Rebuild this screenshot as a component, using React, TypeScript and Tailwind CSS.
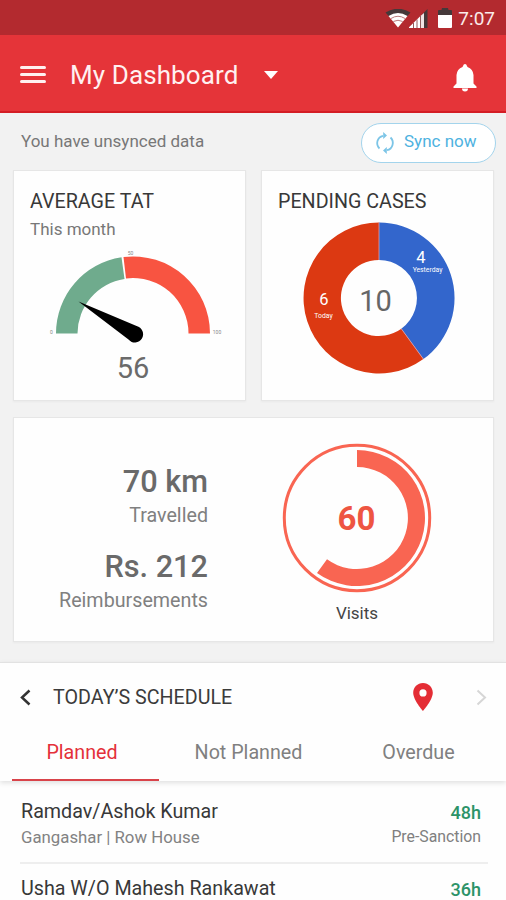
import type { ReactNode } from "react";

function StatusBar() {
  return (
    <div className="flex h-[35px] items-center justify-end bg-[#b32a2f] pr-[11px]">
      <svg width="45" height="20" viewBox="0 0 45 20" className="mt-0.5">
        <path d="M1.500 3.500Q14 -4 26.500 3.500L22.500 8Q14 2.500 5.500 8Z" fill="#45393a" />
        <path d="M4.500 7Q14 1 23.500 7L14 18.500Z" fill="#fff" />
        <path d="M7 9.500Q14 5 21 9.500M9.300 12.500Q14 10 18.700 12.500" fill="none" stroke="#b87a7c" strokeWidth="1" />
        <path d="M25 19V18.200L37 6.500V19Z" fill="#fff" />
        <path d="M37 6.500L43.500 0V19H40V8H37Z" fill="#45393a" />
        <path d="M37 6.500L40 4V19H37Z" fill="#f1e5e5" />
        <path d="M29.500 14V19M33 10.500V19M36.500 7V19" stroke="#85484a" strokeWidth="0.9" />
      </svg>
      <svg width="16" height="21" viewBox="0 0 16 21" className="ml-2">
        <path d="M1 4Q1 3 2 3H4.500L5 1H11L11.500 3H14Q15 3 15 4V8H1Z" fill="#45393a" />
        <path d="M1 8H15V20Q15 21 14 21H2Q1 21 1 20Z" fill="#fff" />
      </svg>
      <span className="ml-[5px] mt-0.5 text-[19px] leading-8 text-[#fbeaea]">7:07</span>
    </div>
  );
}

function Header() {
  return (
    <header className="flex h-[78px] items-center border-b-2 border-[#d41d25] bg-[#e53439] pl-5 pr-[29px]">
      <div className="mt-0.5 flex w-[26px] flex-col gap-1">
        <span className="h-[3px] rounded-full bg-[#fff0f0]" />
        <span className="h-[3px] rounded-full bg-[#fff0f0]" />
        <span className="h-[3px] rounded-full bg-[#fff0f0]" />
      </div>
      <h1 className="ml-6 mt-[3px] text-[26px] leading-8 tracking-[0.1px] text-[#fff0f0]">My Dashboard</h1>
      <svg width="14" height="8" viewBox="0 0 14 8" className="ml-[26px] mt-1">
        <path d="M0 0H14L7 8Z" fill="#fff" />
      </svg>
      <svg width="24" height="28" viewBox="0 0 24 28" className="ml-auto mt-[9px]">
        <path d="M12 0Q13.500 0 14 2L14.500 3Q20 5 20.500 11V19.500L23.500 22.500V24H.5V22.500L3.500 19.500V11Q4 5 9.500 3L10 2Q10.500 0 12 0Z" fill="#fff" />
        <path d="M9 24.500H15Q15 27.500 12 27.500Q9 27.500 9 24.500Z" fill="#fff" />
      </svg>
    </header>
  );
}

function Card({ children, className }: { children: ReactNode; className: string }) {
  return (
    <section className={"border border-[#e6e6e6] bg-[#fefefe] shadow-[0_1px_2px_rgba(0,0,0,0.04)] " + className}>
      {children}
    </section>
  );
}

function Gauge() {
  return (
    <svg width="174" height="94" viewBox="0 0 174 94" className="ml-[35px] mt-[9px]">
      <path d="M7 84.500A77 77 0 0 1 72.500 8.300L75.500 30A55.500 55.500 0 0 0 28.500 84.500Z" fill="#6fab8d" />
      <path d="M74.500 8A77 77 0 0 1 161 84.500H139.500A55.500 55.500 0 0 0 77 29.400Z" fill="#f85441" />
      <path d="M29.500 52.500L87.600 77.100A8.300 8.300 0 1 1 79.500 90.600Z" fill="#000" />
      <g fill="#888" fontSize="5" textAnchor="middle">
        <text x="2.500" y="85">0</text>
        <text x="81.500" y="6">50</text>
        <text x="168" y="85">100</text>
      </g>
    </svg>
  );
}

function PendingDonut() {
  return (
    <svg width="152" height="152" viewBox="-76 -76 152 152" className="ml-[41px] mt-[7px]">
      <path d="M0 -75.500A75.500 75.500 0 0 1 44.400 61.100L22.300 30.700A38 38 0 0 0 0 -38Z" fill="#3366cc" />
      <path d="M0 -75.500A75.500 75.500 0 1 0 44.400 61.100L22.300 30.700A38 38 0 1 1 0 -38Z" fill="#dc3912" />
      <path d="M0 -75.500V-38M44.400 61.100L22.300 30.700" stroke="#d6a0b0" strokeWidth="0.8" />
      <g fill="#fff" textAnchor="middle">
        <text x="42" y="-35" fontSize="16.500">4</text>
        <text x="48.500" y="-26" fontSize="6.800">Yesterday</text>
        <text x="-55" y="6.500" fontSize="16.500">6</text>
        <text x="-55.500" y="19.500" fontSize="6.800">Today</text>
      </g>
      <text x="-3.500" y="12.500" fontSize="29" fill="#666" textAnchor="middle">10</text>
    </svg>
  );
}

function VisitsRing() {
  return (
    <svg width="150" height="150" viewBox="-75 -75 150 150">
      <circle r="72.700" fill="none" stroke="#f96552" strokeWidth="3" />
      <path d="M0 -68A68 68 0 1 1 -40 55L-30 41.300A51 51 0 1 0 0 -51Z" fill="#f96552" />
      <text x="-0.500" y="12" fontSize="33" fontWeight="700" fill="#ee5542" textAnchor="middle">60</text>
    </svg>
  );
}

type Visit = { name: string; place?: string; hours: string; stage?: string };

function VisitRow({ name, place, hours, stage }: Visit) {
  return (
    <div className="mx-[21px] leading-5">
      <div className="flex h-5 items-center justify-between">
        <span className="text-[19.700px] text-[#383838]">{name}</span>
        <span className="mr-1 mt-px text-[18px] font-medium text-[#2c9368]">{hours}</span>
      </div>
      {place && (
        <div className="mt-[5px] flex h-5 items-center justify-between">
          <span className="text-[16.800px] text-[#828282]">{place}</span>
          <span className="mr-1 text-[15.800px] text-[#808080]">{stage}</span>
        </div>
      )}
    </div>
  );
}

export default function App() {
  return (
    <div className="flex h-[900px] w-[506px] flex-col overflow-hidden bg-[#f2f2f2] font-[Roboto,sans-serif]">
      <StatusBar />
      <Header />
      <main className="h-[549px] shrink-0 pl-[13px] pr-3">
        <div className="flex h-[57px] items-center justify-between">
          <span className="ml-2 text-[17px] text-[#777]">You have unsynced data</span>
          <button className="-mr-0.5 mt-0.5 flex h-10 w-[135px] items-center rounded-full border border-[#a3d4ec] bg-white pl-[13px] text-[17px] text-[#4eb2df]">
            <svg width="20" height="22" viewBox="0 0 20 22" fill="none" stroke="#7cc5e7" strokeWidth="1.8">
              <path d="M4.500 16.500A7.500 7.500 0 0 1 8 3.800M15.500 5.500A7.500 7.500 0 0 1 12 18.200" />
              <path d="M8.200 0V7L12 3.500ZM11.800 15V22L8 18.500Z" fill="#7cc5e7" stroke="none" />
            </svg>
            <span className="-mt-px ml-[9px]">Sync now</span>
          </button>
        </div>
        <div className="flex justify-between">
          <Card className="h-[231px] w-[233px] pt-[17px]">
            <h2 className="ml-4 h-7 text-[19.700px] leading-7 text-[#383838]">AVERAGE TAT</h2>
            <p className="ml-4 h-6 text-[17px] leading-[26px] text-[#777]">This month</p>
            <Gauge />
            <p className="ml-[7px] text-center text-[29px] leading-[50px] text-[#6b6b6b]">56</p>
          </Card>
          <Card className="h-[231px] w-[233px] pt-[17px]">
            <h2 className="ml-4 h-[27px] text-[19.700px] leading-7 text-[#383838]">PENDING CASES</h2>
            <PendingDonut />
          </Card>
        </div>
        <Card className="mt-4 flex h-[225px] w-[481px]">
          <div className="w-[194px] pt-[46px] text-right">
            <p className="h-9 text-[30.700px] font-medium leading-9 text-[#6a6a6a]">70 km</p>
            <p className="h-[31px] text-[19.700px] leading-[31px] text-[#808080]">Travelled</p>
            <p className="mt-[18px] h-9 text-[30.700px] font-medium leading-9 text-[#6a6a6a]">Rs. 212</p>
            <p className="h-[31px] text-[19.700px] leading-[31px] text-[#808080]">Reimbursements</p>
          </div>
          <div className="ml-[74px] flex flex-col items-center pt-[25px]">
            <VisitsRing />
            <p className="text-[17px] leading-10 text-[#444]">Visits</p>
          </div>
        </Card>
      </main>
      <section className="relative z-10 h-[119px] shrink-0 border-t border-[#e2e2e2] bg-[#fefefe] shadow-[0_2px_5px_rgba(0,0,0,0.12)]">
        <div className="flex h-[68px] items-center pl-5 pr-[19px]">
          <svg width="11" height="17" viewBox="0 0 11 17" fill="none" stroke="#333" strokeWidth="2.500">
            <path d="M9.500 1.500L2 8.500L9.500 15.500" />
          </svg>
          <h2 className="ml-[22px] mt-0.5 text-[19.700px] text-[#3b3b3b]">TODAY’S SCHEDULE</h2>
          <svg width="20" height="28" viewBox="0 0 20 28" className="ml-auto">
            <path d="M10 0C4.500 0 .2 4.300 .2 9.800C.2 17 10 28 10 28S19.800 17 19.800 9.800C19.800 4.300 15.500 0 10 0ZM10 6.300A3.600 3.600 0 1 1 10 13.500A3.600 3.600 0 1 1 10 6.300Z" fill="#e42d35" fillRule="evenodd" />
          </svg>
          <svg width="11" height="17" viewBox="0 0 11 17" fill="none" stroke="#d6d6d6" strokeWidth="2" className="ml-[43px]">
            <path d="M1.500 1.500L9 8.500L1.500 15.500" />
          </svg>
        </div>
        <nav className="flex h-[50px] text-[19.700px] leading-[44px] text-[#808080]">
          <span className="ml-3 w-[147px] border-b-2 border-[#d9434a] pr-[7px] text-center text-[#e4303a]">Planned</span>
          <span className="w-[179px] text-center">Not Planned</span>
          <span className="w-[161px] text-center">Overdue</span>
        </nav>
      </section>
      <ul className="flex h-[119px] flex-col bg-[#fefefe] pt-[21px]">
        <li>
          <VisitRow name="Ramdav/Ashok Kumar" place="Gangashar | Row House" hours="48h" stage="Pre-Sanction" />
        </li>
        <li className="pt-[15px]">
          <div className="mb-[15px] ml-5 mr-[18px] h-[2px] bg-[#eee]" />
          <VisitRow name="Usha W/O Mahesh Rankawat" hours="36h" />
        </li>
      </ul>
    </div>
  );
}
